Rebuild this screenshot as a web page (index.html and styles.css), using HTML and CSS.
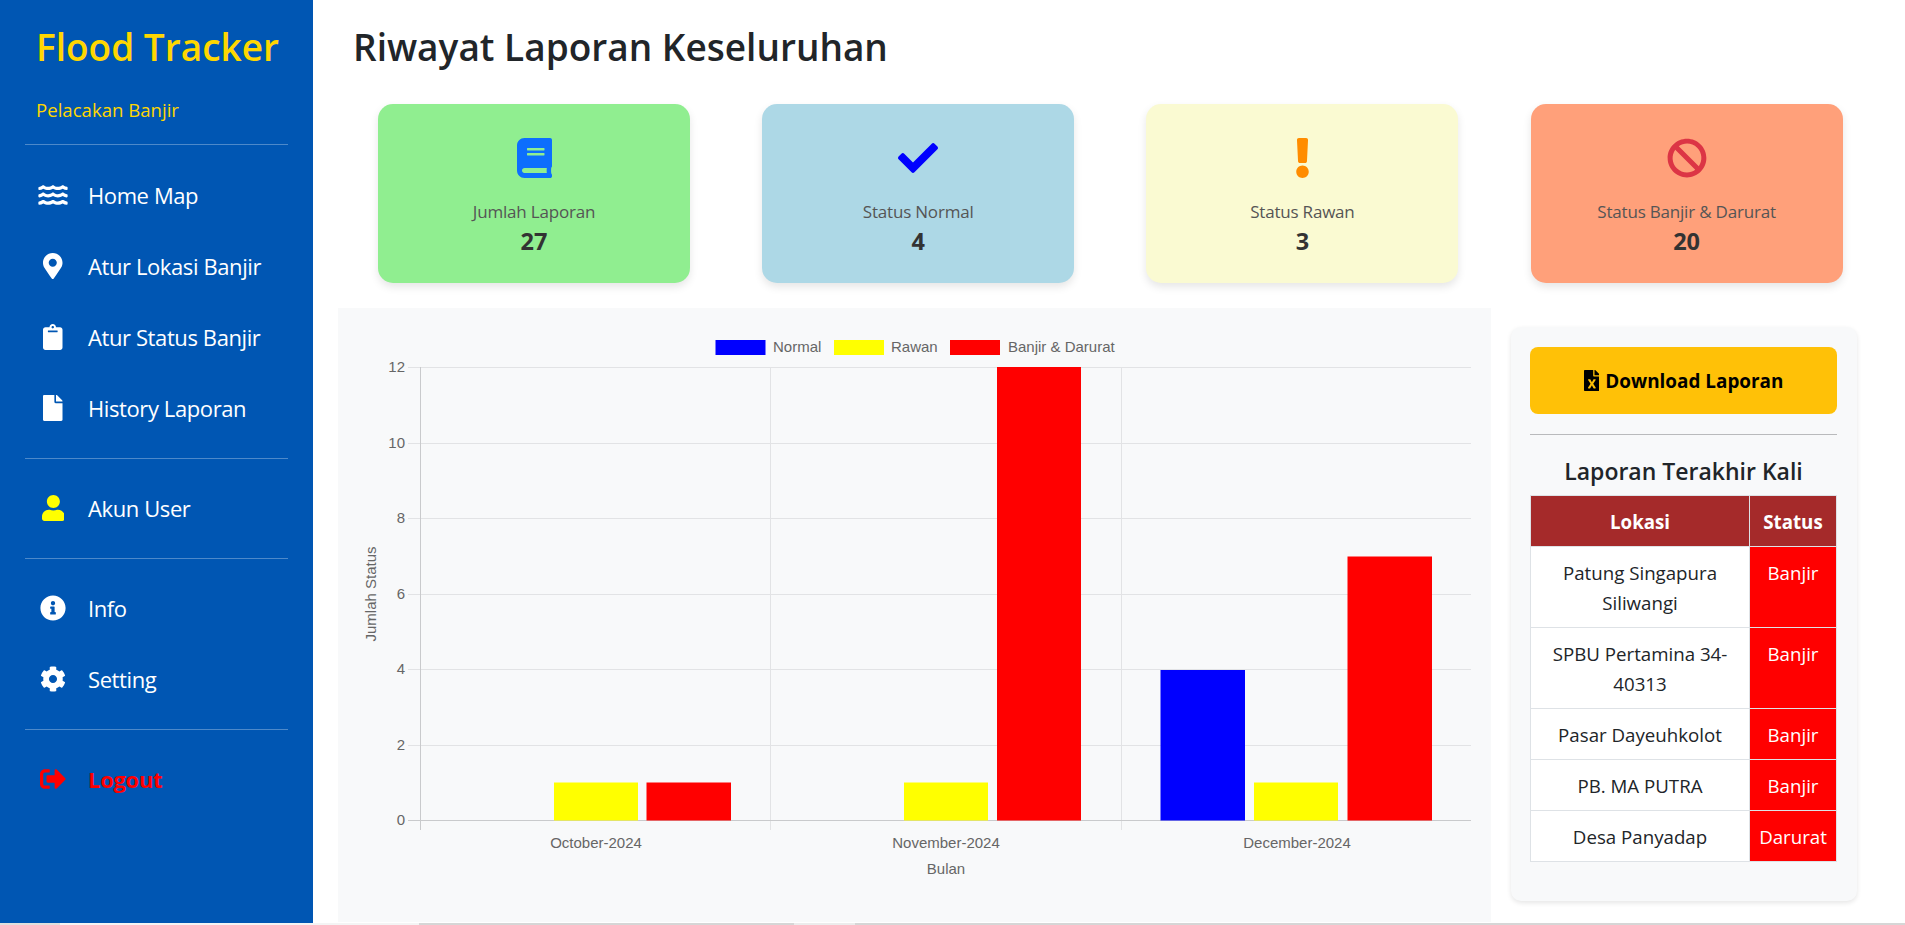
FILE: index.html
```html
<!DOCTYPE html>
<html lang="en">
<head>
  <meta charset="UTF-8">
  <meta name="viewport" content="width=device-width, initial-scale=1.0">
  <title>Riwayat Laporan</title>
  <link rel="stylesheet" href="styles.css">
</head>
<body>

<div class="page">
  <!-- Sidebar -->
  <aside class="sidebar">
    <h1 class="brand">Flood Tracker</h1>
    <p class="tagline">Pelacakan Banjir</p>
    <hr class="side-line line-first">
    <a class="nav-item" href="#">
      <span class="nav-icon"><svg class="icon-water" viewBox="0 0 576 512"><path d="M562.1 383.9c-21.5-2.4-42.1-10.5-57.9-22.9-14.1-11.1-34.2-11.3-48.2 0-37.9 30.4-107.2 30.4-145.7-1.5-13.5-11.2-33-9.1-46.7 1.8-38 30.1-106.9 30-145.2-1.7-13.5-11.2-33.3-8.9-47.1 2-15.5 12.2-36 20.1-57.7 22.4-7.9.8-13.6 7.8-13.6 15.7v32.2c0 9.1 7.6 16.8 16.7 16 28.8-2.5 56.1-11.4 79.4-25.9 56.5 34.6 137 34.1 192 0 56.5 34.6 137 34.1 192 0 23.3 14.2 50.9 23.3 79.1 25.8 9.1.8 16.7-6.9 16.7-16v-31.6c.1-8-5.7-15.4-13.8-16.3zm0-144c-21.5-2.4-42.1-10.5-57.9-22.9-14.1-11.1-34.2-11.3-48.2 0-37.9 30.4-107.2 30.4-145.7-1.5-13.5-11.2-33-9.1-46.7 1.8-38 30.1-106.9 30-145.2-1.7-13.5-11.2-33.3-8.9-47.1 2-15.5 12.2-36 20.1-57.7 22.4-7.9.8-13.6 7.8-13.6 15.7v32.2c0 9.1 7.6 16.8 16.7 16 28.8-2.5 56.1-11.4 79.4-25.9 56.5 34.6 137 34.1 192 0 56.5 34.6 137 34.1 192 0 23.3 14.2 50.9 23.3 79.1 25.8 9.1.8 16.7-6.9 16.7-16v-31.6c.1-8-5.7-15.4-13.8-16.3zm0-144C540.6 93.4 520 85.4 504.2 73 490.1 61.9 470 61.7 456 73c-37.9 30.4-107.2 30.4-145.7-1.5-13.5-11.2-33-9.1-46.7 1.8-38 30.1-106.9 30-145.2-1.7-13.5-11.2-33.3-8.9-47.1 2-15.5 12.2-36 20.1-57.7 22.4-7.9.8-13.6 7.8-13.6 15.7v32.2c0 9.1 7.6 16.8 16.7 16 28.8-2.5 56.1-11.4 79.4-25.9 56.5 34.6 137 34.1 192 0 56.5 34.6 137 34.1 192 0 23.3 14.2 50.9 23.3 79.1 25.8 9.1.8 16.7-6.9 16.7-16v-31.6c.1-8-5.7-15.4-13.8-16.3z"/></svg></span>
      Home Map
    </a>
    <a class="nav-item" href="#">
      <span class="nav-icon"><svg viewBox="0 0 384 512"><path d="M172.268 501.67C26.97 291.031 0 269.413 0 192 0 85.961 85.961 0 192 0s192 85.961 192 192c0 77.413-26.97 99.031-172.268 309.67-9.535 13.774-29.93 13.773-39.464 0zM192 272c44.183 0 80-35.817 80-80s-35.817-80-80-80-80 35.817-80 80 35.817 80 80 80z"/></svg></span>
      Atur Lokasi Banjir
    </a>
    <a class="nav-item" href="#">
      <span class="nav-icon"><svg viewBox="0 0 384 512"><path d="M384 112v352c0 26.51-21.49 48-48 48H48c-26.51 0-48-21.49-48-48V112c0-26.51 21.49-48 48-48h80c0-35.29 28.71-64 64-64s64 28.71 64 64h80c26.51 0 48 21.49 48 48zM192 40c-13.255 0-24 10.745-24 24s10.745 24 24 24 24-10.745 24-24-10.745-24-24-24m96 114v-20a6 6 0 0 0-6-6H102a6 6 0 0 0-6 6v20a6 6 0 0 0 6 6h180a6 6 0 0 0 6-6z"/></svg></span>
      Atur Status Banjir
    </a>
    <a class="nav-item" href="#">
      <span class="nav-icon"><svg viewBox="0 0 384 512"><path d="M224 136V0H24C10.7 0 0 10.7 0 24v464c0 13.3 10.7 24 24 24h336c13.3 0 24-10.7 24-24V160H248c-13.2 0-24-10.8-24-24zm160-14.1v6.1H256V0h6.1c6.4 0 12.5 2.5 17 7l97.9 98c4.5 4.5 7 10.6 7 16.9z"/></svg></span>
      History Laporan
    </a>
    <hr class="side-line">
    <a class="nav-item" href="#">
      <span class="nav-icon icon-yellow"><svg viewBox="0 0 448 512"><path d="M224 256c70.7 0 128-57.3 128-128S294.7 0 224 0 96 57.3 96 128s57.3 128 128 128zm89.6 32h-16.7c-22.2 10.2-46.9 16-72.9 16s-50.6-5.8-72.9-16h-16.7C60.2 288 0 348.2 0 422.4V464c0 26.5 21.5 48 48 48h352c26.5 0 48-21.5 48-48v-41.6c0-74.2-60.2-134.4-134.4-134.4z"/></svg></span>
      Akun User
    </a>
    <hr class="side-line">
    <a class="nav-item" href="#">
      <span class="nav-icon"><svg viewBox="0 0 512 512"><path d="M256 8C119.043 8 8 119.083 8 256c0 136.997 111.043 248 248 248s248-111.003 248-248C504 119.083 392.957 8 256 8zm0 110c23.196 0 42 18.804 42 42s-18.804 42-42 42-42-18.804-42-42 18.804-42 42-42zm56 254c0 6.627-5.373 12-12 12h-88c-6.627 0-12-5.373-12-12v-24c0-6.627 5.373-12 12-12h12v-64h-12c-6.627 0-12-5.373-12-12v-24c0-6.627 5.373-12 12-12h64c6.627 0 12 5.373 12 12v100h12c6.627 0 12 5.373 12 12v24z"/></svg></span>
      Info
    </a>
    <a class="nav-item" href="#">
      <span class="nav-icon"><svg viewBox="0 0 512 512"><path d="M487.4 315.7l-42.6-24.6c4.3-23.2 4.3-47 0-70.2l42.6-24.6c4.9-2.8 7.1-8.6 5.5-14-11.1-35.6-30-67.8-54.7-94.6-3.8-4.1-10-5.1-14.8-2.3L380.8 110c-17.9-15.4-38.5-27.3-60.8-35.1V25.8c0-5.6-3.9-10.5-9.4-11.7-36.7-8.2-74.3-7.8-109.2 0-5.5 1.2-9.4 6.1-9.4 11.7V75c-22.2 7.9-42.8 19.8-60.8 35.1L88.7 85.5c-4.9-2.8-11-1.9-14.8 2.3-24.7 26.7-43.6 58.9-54.7 94.6-1.7 5.4.6 11.2 5.5 14L67.3 221c-4.3 23.2-4.3 47 0 70.2l-42.6 24.6c-4.9 2.8-7.1 8.6-5.5 14 11.1 35.6 30 67.8 54.7 94.6 3.8 4.1 10 5.1 14.8 2.3l42.6-24.6c17.9 15.4 38.5 27.3 60.8 35.1v49.2c0 5.6 3.9 10.5 9.4 11.7 36.7 8.2 74.3 7.8 109.2 0 5.5-1.2 9.4-6.1 9.4-11.7v-49.2c22.2-7.9 42.8-19.8 60.8-35.1l42.6 24.6c4.9 2.8 11 1.9 14.8-2.3 24.7-26.7 43.6-58.9 54.7-94.6 1.5-5.5-.7-11.3-5.6-14.1zM256 336c-44.1 0-80-35.9-80-80s35.9-80 80-80 80 35.9 80 80-35.9 80-80 80z"/></svg></span>
      Setting
    </a>
    <hr class="side-line">
    <a class="nav-item logout" href="#">
      <span class="nav-icon"><svg viewBox="0 0 512 512"><path d="M497 273L329 441c-15 15-41 4.5-41-17v-96H152c-13.3 0-24-10.7-24-24v-96c0-13.3 10.7-24 24-24h136V88c0-21.4 25.9-32 41-17l168 168c9.3 9.4 9.3 24.6 0 34zM192 436v-40c0-6.6-5.4-12-12-12H96c-17.7 0-32-14.3-32-32V160c0-17.7 14.3-32 32-32h84c6.6 0 12-5.4 12-12V76c0-6.6-5.4-12-12-12H96c-53 0-96 43-96 96v192c0 53 43 96 96 96h84c6.6 0 12-5.4 12-12z"/></svg></span>
      Logout
    </a>
  </aside>

  <!-- Main content -->
  <main class="content">
    <h2 class="page-title">Riwayat Laporan Keseluruhan</h2>

    <div class="stat-row">
      <div class="stat-card bg-green">
        <svg class="stat-icon icon-blue" viewBox="0 0 448 512"><path d="M448 360V24c0-13.3-10.7-24-24-24H96C43 0 0 43 0 96v320c0 53 43 96 96 96h328c13.3 0 24-10.7 24-24v-16c0-7.5-3.5-14.3-8.9-18.7-4.2-15.4-4.2-59.3 0-74.7 5.4-4.3 8.9-11.1 8.9-18.6zM128 134c0-3.3 2.7-6 6-6h212c3.3 0 6 2.7 6 6v20c0 3.3-2.7 6-6 6H134c-3.3 0-6-2.7-6-6v-20zm0 64c0-3.3 2.7-6 6-6h212c3.3 0 6 2.7 6 6v20c0 3.3-2.7 6-6 6H134c-3.3 0-6-2.7-6-6v-20zm253.4 250H96c-17.7 0-32-14.3-32-32 0-17.6 14.4-32 32-32h285.4c-1.9 17.1-1.9 46.9 0 64z"/></svg>
        <div class="stat-label">Jumlah Laporan</div>
        <div class="stat-value">27</div>
      </div>
      <div class="stat-card bg-sky">
        <svg class="stat-icon icon-navy" viewBox="0 0 512 512"><path d="M173.898 439.404l-166.4-166.4c-9.997-9.997-9.997-26.206 0-36.204l36.203-36.204c9.997-9.998 26.207-9.998 36.204 0L192 312.69 432.095 72.596c9.997-9.997 26.207-9.997 36.204 0l36.203 36.204c9.997 9.997 9.997 26.206 0 36.204l-294.4 294.401c-9.998 9.997-26.207 9.997-36.204-.001z"/></svg>
        <div class="stat-label">Status Normal</div>
        <div class="stat-value">4</div>
      </div>
      <div class="stat-card bg-cream">
        <svg class="stat-icon icon-orange" viewBox="0 0 192 512"><path d="M176 432c0 44.112-35.888 80-80 80s-80-35.888-80-80 35.888-80 80-80 80 35.888 80 80zM25.26 25.199l13.6 272C39.499 309.972 50.041 320 62.83 320h66.34c12.789 0 23.331-10.028 23.97-22.801l13.6-272C167.425 11.49 156.496 0 142.77 0H49.23C35.504 0 24.575 11.49 25.26 25.199z"/></svg>
        <div class="stat-label">Status Rawan</div>
        <div class="stat-value">3</div>
      </div>
      <div class="stat-card bg-salmon">
        <svg class="stat-icon icon-red" viewBox="0 0 512 512"><path d="M256 8C119.034 8 8 119.033 8 256s111.034 248 248 248 248-111.034 248-248S392.967 8 256 8zm130.108 117.892c65.448 65.448 70 165.481 20.677 235.637L150.47 105.216c70.204-49.356 170.226-44.735 235.638 20.676zM125.892 386.108c-65.448-65.448-70-165.481-20.677-235.637L361.53 406.784c-70.203 49.356-170.226 44.736-235.638-20.676z"/></svg>
        <div class="stat-label">Status Banjir &amp; Darurat</div>
        <div class="stat-value">20</div>
      </div>
    </div>

    <div class="lower">
      <!-- Chart -->
      <div class="chart-box">
        <svg class="chart" viewBox="0 0 1153 614" width="1153" height="614">
          <g class="grid">
            <line x1="70" y1="59.5" x2="1133" y2="59.5"/>
            <line x1="70" y1="135.5" x2="1133" y2="135.5"/>
            <line x1="70" y1="210.5" x2="1133" y2="210.5"/>
            <line x1="70" y1="286.5" x2="1133" y2="286.5"/>
            <line x1="70" y1="361.5" x2="1133" y2="361.5"/>
            <line x1="70" y1="437.5" x2="1133" y2="437.5"/>
            <line x1="432.5" y1="59" x2="432.5" y2="522"/>
            <line x1="783.5" y1="59" x2="783.5" y2="522"/>
          </g>
          <g class="axis">
            <line x1="82.5" y1="59" x2="82.5" y2="522"/>
            <line x1="70" y1="512.5" x2="1133" y2="512.5"/>
          </g>
          <rect x="377.5" y="32" width="50" height="15" class="bar-blue"/>
          <rect x="496" y="32" width="50" height="15" class="bar-yellow"/>
          <rect x="612" y="32" width="50" height="15" class="bar-red"/>
          <g class="chart-text">
            <text x="435" y="44">Normal</text>
            <text x="553" y="44">Rawan</text>
            <text x="670" y="44">Banjir &amp; Darurat</text>
            <text x="67" y="64" text-anchor="end">12</text>
            <text x="67" y="140" text-anchor="end">10</text>
            <text x="67" y="215" text-anchor="end">8</text>
            <text x="67" y="291" text-anchor="end">6</text>
            <text x="67" y="366" text-anchor="end">4</text>
            <text x="67" y="442" text-anchor="end">2</text>
            <text x="67" y="517" text-anchor="end">0</text>
            <text x="258" y="540" text-anchor="middle">October-2024</text>
            <text x="608" y="540" text-anchor="middle">November-2024</text>
            <text x="959" y="540" text-anchor="middle">December-2024</text>
            <text x="608" y="566" text-anchor="middle">Bulan</text>
            <text transform="translate(38 286) rotate(-90)" text-anchor="middle">Jumlah Status</text>
          </g>
          <rect x="216" y="474.5" width="84" height="38" class="bar-yellow"/>
          <rect x="308.5" y="474.5" width="84.5" height="38" class="bar-red"/>
          <rect x="566" y="474.5" width="84" height="38" class="bar-yellow"/>
          <rect x="659" y="59" width="84" height="453.5" class="bar-red"/>
          <rect x="822.5" y="362" width="84.5" height="150.5" class="bar-blue"/>
          <rect x="916" y="474.5" width="84" height="38" class="bar-yellow"/>
          <rect x="1009.5" y="248.5" width="84.5" height="264" class="bar-red"/>
        </svg>
      </div>

      <!-- Latest reports -->
      <div class="report-panel">
        <button class="download-btn">
          <svg viewBox="0 0 384 512"><path d="M224 136V0H24C10.7 0 0 10.7 0 24v464c0 13.3 10.7 24 24 24h336c13.3 0 24-10.7 24-24V160H248c-13.2 0-24-10.8-24-24zm60.1 106.5L224 336l60.1 93.5c5.1 8-.6 18.5-10.1 18.5h-34.9c-4.4 0-8.5-2.4-10.6-6.3C208.9 405.5 192 373 192 373c-6.4 14.8-10 20-36.6 68.8-2.1 3.9-6.1 6.3-10.5 6.3H110c-9.5 0-15.2-10.5-10.1-18.5l60.3-93.5-60.3-93.5c-5.2-8 .6-18.5 10.1-18.5h34.8c4.4 0 8.5 2.4 10.6 6.3 26.1 48.8 20 33.6 36.6 68.5 0 0 6.1-11.7 36.6-68.5 2.1-3.9 6.2-6.3 10.6-6.3H274c9.5-.1 15.2 10.4 10.1 18.4zM384 121.9v6.1H256V0h6.1c6.4 0 12.5 2.5 17 7l97.9 98c4.5 4.5 7 10.6 7 16.9z"/></svg>
          Download Laporan
        </button>
        <hr class="panel-line">
        <h4 class="panel-title">Laporan Terakhir Kali</h4>
        <table class="report-table">
          <thead>
            <tr><th class="col-place">Lokasi</th><th>Status</th></tr>
          </thead>
          <tbody>
            <tr><td>Patung Singapura Siliwangi</td><td class="status-cell">Banjir</td></tr>
            <tr><td>SPBU Pertamina 34-40313</td><td class="status-cell">Banjir</td></tr>
            <tr><td>Pasar Dayeuhkolot</td><td class="status-cell">Banjir</td></tr>
            <tr><td>PB. MA PUTRA</td><td class="status-cell">Banjir</td></tr>
            <tr><td>Desa Panyadap</td><td class="status-cell">Darurat</td></tr>
          </tbody>
        </table>
      </div>
    </div>
  </main>
</div>

<!-- sliver of the window behind, along the bottom edge -->
<div class="bottom-edge">
  <span class="edge-start"></span>
  <span class="edge-white"></span>
  <span class="edge-gray"></span>
  <span class="edge-thumb"></span>
  <span class="edge-rest"></span>
</div>

</body>
</html>
```

FILE: styles.css
```css
* {
  box-sizing: border-box;
}
html, body {
  height: 100%;
}
body {
  margin: 0;
  font-family: "Open Sans", "Noto Sans", sans-serif;
  color: #212529;
  background-color: #fff;
  overflow: hidden;
}
.page {
  display: flex;
  height: 923px;
  overflow: hidden;
}
.bottom-edge {
  display: flex;
  height: 2px;
}
.edge-start { width: 60px; background-color: #e0e0de; }
.edge-white { width: 359px; background-color: #f4f4f4; }
.edge-gray { width: 375px; background-color: #d6d6d6; }
.edge-thumb { width: 61px; background-color: #ececec; }
.edge-rest { flex: 1; background-color: #d6d6d6; }

/* Sidebar */
.sidebar {
  width: 313px;
  flex-shrink: 0;
  padding: 0 25px;
  background-color: #0056b3;
}
.brand {
  margin: 21px 0 0 11px;
  font-size: 37px;
  line-height: 52px;
  font-weight: 600;
  color: #ffd700;
  white-space: nowrap;
}
.tagline {
  margin: 23px 0 0 11px;
  font-size: 18.6px;
  line-height: 27px;
  color: #ffd700;
}
.side-line {
  margin: 15px 0 13px;
  border: none;
  border-top: 1px solid rgba(255, 255, 255, 0.3);
}
.line-first {
  margin: 21px 0 14px;
}
.nav-item {
  display: flex;
  align-items: center;
  height: 71px;
  padding-left: 13px;
  font-size: 22px;
  letter-spacing: -0.4px;
  color: #fff;
  text-decoration: none;
  white-space: nowrap;
}
.nav-icon {
  display: flex;
  justify-content: center;
  width: 30px;
  margin-right: 20px;
  fill: #fff;
}
.nav-icon svg {
  height: 26px;
  width: auto;
}
.nav-icon .icon-water {
  height: 26px;
  width: 30px;
}
.icon-yellow {
  fill: #ff0;
}
.logout {
  color: #f00;
  font-weight: 700;
  letter-spacing: -0.3px;
}
.logout .nav-icon {
  fill: #f00;
}

/* Main */
.content {
  flex: 1;
  padding: 0 0 0 25px;
  min-width: 0;
}
.page-title {
  margin: 22px 0 0 15px;
  font-size: 37px;
  line-height: 50px;
  font-weight: 600;
}
.stat-row {
  display: grid;
  grid-template-columns: repeat(4, 312px);
  column-gap: 72.2px;
  margin: 32px 0 0 40px;
}
.stat-card {
  height: 179px;
  padding-top: 34px;
  border-radius: 15px;
  text-align: center;
  box-shadow: 0 4px 8px rgba(0, 0, 0, 0.1);
}
.stat-icon {
  display: block;
  height: 40px;
  margin: 0 auto;
}
.bg-green { background-color: #90ee90; }
.bg-sky { background-color: #add8e6; }
.bg-cream { background-color: #fafad2; }
.bg-salmon { background-color: #ffa07a; }
.icon-blue { fill: #0d6efd; }
.icon-navy { fill: #00f; }
.icon-orange { fill: #ff8c00; }
.icon-red { fill: #dc3545; }
.stat-label {
  margin-top: 20px;
  font-size: 17px;
  letter-spacing: -0.2px;
  line-height: 27px;
  color: #555;
}
.stat-value {
  margin-top: 1px;
  font-size: 23.5px;
  line-height: 30px;
  font-weight: 700;
  color: #333;
}

/* Chart + table */
.lower {
  display: flex;
  align-items: flex-start;
  margin-top: 25px;
}
.chart-box {
  width: 1153px;
  height: 614px;
  flex-shrink: 0;
  background-color: #f8f9fa;
}
.chart {
  display: block;
}
.grid line {
  stroke: #e2e3e5;
  stroke-width: 1;
}
.axis line {
  stroke: #c9cacc;
  stroke-width: 1;
}
.chart-text text {
  font-family: "Liberation Sans", Arial, sans-serif;
  font-size: 15px;
  fill: #666;
}
.bar-blue { fill: #00f; }
.bar-yellow { fill: #ff0; }
.bar-red { fill: #f00; }

.report-panel {
  width: 346px;
  height: 574px;
  margin: 19px 0 0 20px;
  padding: 20px 20px 20px 19px;
  border-radius: 10px;
  background-color: #f8f9fa;
  box-shadow: 0 2px 5px rgba(0, 0, 0, 0.1);
}
.download-btn {
  display: flex;
  align-items: center;
  justify-content: center;
  gap: 6px;
  width: 100%;
  height: 67px;
  border: none;
  border-radius: 8px;
  background-color: #ffc107;
  color: #000;
  font-family: inherit;
  font-size: 18.9px;
  font-weight: 700;
}
.download-btn svg {
  height: 21px;
}
.panel-line {
  margin: 20px 0 0;
  border: none;
  border-top: 1px solid #b9babc;
}
.panel-title {
  margin: 21px 0 9px;
  font-size: 23px;
  line-height: 30px;
  font-weight: 600;
  text-align: center;
}
.report-table {
  width: 100%;
  border-collapse: collapse;
  table-layout: fixed;
  font-size: 18.7px;
  line-height: 30px;
  text-align: center;
  background-color: #fff;
}
.report-table th,
.report-table td {
  padding: 11px 10px 9px;
  border: 1px solid #dee2e6;
  vertical-align: top;
}
.report-table th {
  background-color: #a52a2a;
  color: #fff;
  font-weight: 700;
}
.col-place {
  width: 219px;
}
.report-table .status-cell {
  padding: 11px 0 9px;
  background-color: #f00;
  color: #fff;
}
```
